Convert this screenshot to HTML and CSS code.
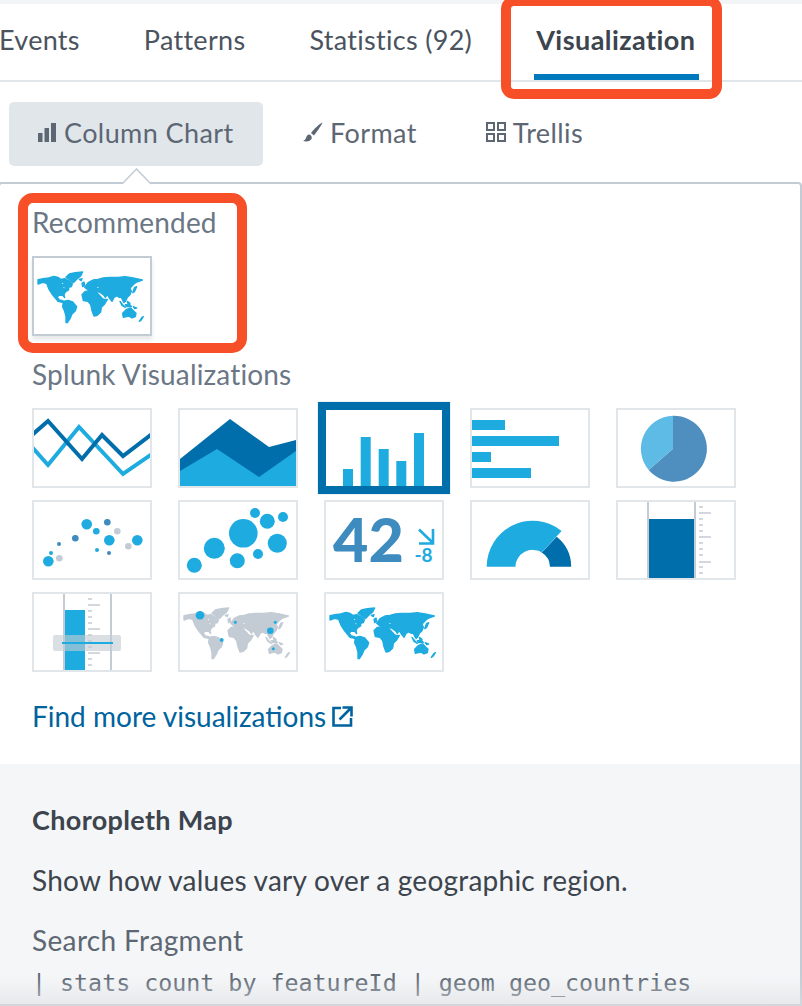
FILE: index.html
```html
<!DOCTYPE html>
<html lang="en">
<head>
<meta charset="utf-8">
<title>Visualization</title>
<link rel="stylesheet" href="styles.css">
</head>
<body>
<svg class="defs" width="0" height="0" aria-hidden="true">
  <symbol id="world" viewBox="0 0 348 228">
    <g transform="translate(12 18)">
      <path d="M0 47L20 43L32 42L48 37L60 40L68 46L80 44L96 52L103 60L100 68L92 70L92 78L82 84L78 92L80 101L74 94L62 94L58 100L64 108L74 110L80 116L70 114L60 112L50 100L42 90L34 78L30 68L26 58L14 55L0 60Z"/>
      <path d="M84 40L94 30L112 26L134 24L128 36L116 46L106 56L96 48Z"/>
      <path d="M76 112L90 109L104 114L116 128L112 140L102 150L96 164L88 176L84 176L84 158L80 142L74 128Z"/>
      <path d="M140 70L150 56L165 48L180 46L196 42L215 40L240 40L262 38L285 42L313 48L296 54L290 58L282 66L276 72L280 82L276 92L268 100L262 112L256 112L250 100L244 100L236 96L228 100L222 112L214 102L208 92L202 100L196 92L184 84L168 82L150 78Z"/>
      <path d="M132 92L142 82L160 80L175 84L186 96L196 106L208 106L200 120L190 130L188 144L178 154L168 156L162 140L158 122L150 112L136 110Z"/>
      <path d="M254 148L266 136L278 132L286 140L294 148L292 158L282 162L272 156L256 160Z"/>
      <path d="M246 112L254 122L262 130L252 124ZM262 122L276 122L280 128L266 128ZM286 128L296 132L290 134ZM256 104L262 110L258 116ZM268 112L276 118L270 120ZM312 160L316 158L310 168L304 172ZM132 58L138 54L140 64L134 68ZM290 70L296 68L290 82L284 86ZM124 46L132 44L130 50Z"/>
      <path class="cut" d="M72 56L76 58L73 61ZM76 69L81 72L77 73ZM177 69L183 70L179 72ZM191 94L196 102L194 102Z"/>
    </g>
  </symbol>
</svg>

<div class="page">
  <div class="topstrip"></div>

  <nav class="tabs">
    <span class="tab">Events</span>
    <span class="tab">Patterns</span>
    <span class="tab">Statistics (92)</span>
    <span class="tab tab-active">Visualization</span>
  </nav>

  <div class="subnav">
    <div class="subbtn subbtn-active">
      <svg class="ico-bars" viewBox="0 0 18 19"><rect x="0" y="10" width="4.500" height="9"/><rect x="6.500" y="5" width="4.500" height="14"/><rect x="13" y="0" width="5" height="19"/></svg>
      <span>Column Chart</span>
    </div>
    <div class="subbtn">
      <svg class="ico-brush" viewBox="0 0 20 20"><path d="M19.500 0.500c-2 .5-8 6-11.500 10.500l3 2.500c3.500-4.500 8-11 8.500-13zM6.500 12.500c-2.500 0-3 2-3.500 3.500-.4 1.300-1.500 2.500-3 3 3 1 7 .5 8.500-2 .8-1.500 0-4-2-4.500z"/></svg>
      <span>Format</span>
    </div>
    <div class="subbtn">
      <svg class="ico-grid" viewBox="0 0 20 20"><rect x="1" y="1" width="7" height="7"/><rect x="12" y="1" width="7" height="7"/><rect x="1" y="12" width="7" height="7"/><rect x="12" y="12" width="7" height="7"/></svg>
      <span>Trellis</span>
    </div>
  </div>

  <section class="panel">
    <svg class="caret" viewBox="0 0 30 17"><path d="M0 16 L14.500 1 L29 16"/></svg>
    <div class="picker">
      <h3 class="group-title">Recommended</h3>
      <div class="tile tile-rec"><svg class="world world-blue" viewBox="0 0 116 76"><use href="#world" width="116" height="76"/></svg></div>

      <h3 class="group-title group-second">Splunk Visualizations</h3>
      <div class="grid">
        <div class="tile"><svg viewBox="0 0 116 76">
          <polyline class="ln ln-light" points="-2,37 14,55 45,17 89,64 118,44"/>
          <polyline class="ln ln-dark" points="-2,25 14,11 48,49 68,25 89,46 118,24"/>
        </svg></div>
        <div class="tile"><svg viewBox="0 0 116 76">
          <polygon class="dark" points="0,49 50,9 89,37 116,30 116,76 0,76"/>
          <polygon class="light" points="0,61 37,39 79,67 116,41 116,76 0,76"/>
        </svg></div>
        <div class="tile tile-sel"><svg viewBox="0 0 116 76">
          <rect class="light" x="17" y="59" width="10" height="17"/>
          <rect class="light" x="34.700" y="27" width="10" height="49"/>
          <rect class="light" x="52.700" y="39" width="10" height="37"/>
          <rect class="light" x="70.300" y="51" width="10" height="25"/>
          <rect class="light" x="88" y="23" width="10" height="53"/>
        </svg></div>
        <div class="tile"><svg viewBox="0 0 116 76">
          <rect class="light" x="0" y="10" width="33" height="10"/>
          <rect class="light" x="0" y="26" width="87" height="10"/>
          <rect class="light" x="0" y="42" width="19" height="10"/>
          <rect class="light" x="0" y="58" width="59" height="10"/>
        </svg></div>
        <div class="tile"><svg viewBox="0 0 116 76">
          <path class="pie-mid" d="M55 38.700L55 5.700A33 33 0 1 1 30.700 60Z"/>
          <path class="pie-light" d="M55 38.700L30.700 60A33 33 0 0 1 55 5.700Z"/>
        </svg></div>

        <div class="tile"><svg viewBox="0 0 116 76">
          <circle class="light" cx="52.700" cy="22.300" r="5.300"/><circle class="light" cx="62.300" cy="29.300" r="3.300"/>
          <circle class="mid" cx="73.300" cy="20.300" r="3.300"/><circle class="grey" cx="83.300" cy="29.300" r="3.300"/>
          <circle class="light" cx="75.300" cy="38.300" r="5.300"/><circle class="light" cx="103.300" cy="38.300" r="5.300"/>
          <circle class="grey" cx="94.300" cy="44.300" r="3.300"/><circle class="mid" cx="41.300" cy="36.300" r="3.300"/>
          <circle class="mid" cx="25" cy="42" r="2"/><circle class="light" cx="63" cy="48" r="2"/>
          <circle class="mid" cx="75" cy="51" r="2"/><circle class="light" cx="17" cy="51" r="2"/>
          <circle class="grey" cx="25.300" cy="56.300" r="3.300"/><circle class="light" cx="14.300" cy="59.300" r="5.300"/>
        </svg></div>
        <div class="tile"><svg viewBox="0 0 116 76">
          <circle class="light" cx="75" cy="11" r="5"/><circle class="light" cx="87.300" cy="19.300" r="7.500"/>
          <circle class="light" cx="103" cy="15" r="5"/><circle class="light" cx="63.300" cy="31.300" r="14.300"/>
          <circle class="light" cx="97.300" cy="41.300" r="9.500"/><circle class="light" cx="34.300" cy="46.300" r="10.500"/>
          <circle class="light" cx="57.300" cy="58.700" r="7.500"/><circle class="light" cx="78" cy="52" r="5"/>
          <circle class="light" cx="14.300" cy="63.300" r="7.500"/>
        </svg></div>
        <div class="tile"><svg viewBox="0 0 116 76">
          <text class="sv-big" x="7" y="60.300">42</text>
          <path class="sv-arrow" d="M93 27.500L106 40M107 27V41.500H93"/>
          <text class="sv-small" x="88.500" y="60.300">-8</text>
        </svg></div>
        <div class="tile"><svg viewBox="0 0 116 76">
          <path class="dark" d="M84.700 34.700A38.500 38.500 0 0 1 99.200 64.700L78 64.700A17.300 17.300 0 0 0 69.700 50.400Z"/>
          <path class="light" d="M14.700 64.700A46 46 0 0 1 89.600 29L69.700 50.400A17.300 17.300 0 0 0 43.400 64.700Z"/>
        </svg></div>
        <div class="tile"><svg viewBox="0 0 116 76">
          <rect class="grey" x="29" y="0" width="2" height="76"/><rect class="grey" x="76" y="0" width="2" height="76"/>
          <rect class="dark" x="31" y="17" width="45" height="59"/>
          <path class="ticks" d="M81 5h4M81 11h12M81 17h4M81 23h4M81 29h4M81 35h12M81 41h4M81 47h4M81 53h4M81 60h12M81 65h4M81 71h4"/>
        </svg></div>

        <div class="tile"><svg viewBox="0 0 116 76">
          <rect class="grey" x="29" y="0" width="2" height="76"/><rect class="grey" x="76" y="0" width="2" height="76"/>
          <rect class="light" x="31" y="16" width="20" height="60"/>
          <path class="ticks" d="M54 5h4M54 11h12M54 17h4M54 23h4M54 29h4M54 35h12M54 41h4M54 47h4M54 53h4M54 59h12M54 65h4M54 71h4"/>
          <rect class="marker" x="19" y="41" width="68" height="16" rx="2"/>
          <rect class="light" x="28" y="48" width="51" height="2"/>
        </svg></div>
        <div class="tile"><svg class="world world-grey" viewBox="0 0 116 76">
          <use href="#world" width="116" height="76"/>
          <circle class="light" cx="20" cy="21.300" r="4.300"/><circle class="light" cx="55.300" cy="28.300" r="1.500"/>
          <circle class="light" cx="95.300" cy="28.300" r="1.500"/><circle class="light" cx="90.300" cy="36.700" r="3.300"/>
          <circle class="light" cx="41.700" cy="46" r="2"/><circle class="light" cx="93.300" cy="54.700" r="1.500"/>
        </svg></div>
        <div class="tile"><svg class="world world-blue" viewBox="0 0 116 76"><use href="#world" width="116" height="76"/></svg></div>
      </div>

      <a class="more" href="#">Find more visualizations
        <svg class="ico-ext" viewBox="0 0 21 21"><path d="M9 2H1.500V19.500H19V12"/><path d="M7.500 13.500L18 3M10.500 1.500H19.500V10.500"/></svg>
      </a>
    </div>

    <div class="details">
      <h4 class="det-title">Choropleth Map</h4>
      <p class="det-desc">Show how values vary over a geographic region.</p>
      <p class="det-label">Search Fragment</p>
      <p class="det-code">| stats count by featureId | geom geo_countries</p>
    </div>
  </section>

  <div class="fade"></div>
  <div class="callout callout-tab"></div>
  <div class="callout callout-rec"></div>
</div>
</body>
</html>
```

FILE: styles.css
```css
* { box-sizing: border-box; }
html, body { margin: 0; padding: 0; background: #fff; }
body { font-family: Lato, "Open Sans", sans-serif; color: #3c444d; }
.defs { position: absolute; }
.page { position: relative; width: 802px; height: 1006px; overflow: hidden; background: #fff; }

.topstrip { height: 4px; background: #f2f4f5; }

.tabs { display: flex; height: 78px; gap: 60px; margin-left: -3px; border-bottom: 2px solid #e1e6eb; }
.tab { display: flex; align-items: center; height: 76px; padding: 2px 2px 2px; font-size: 27px; letter-spacing: .3px; color: #4a535e; border-bottom: 6px solid transparent; }
.tab-active { padding-right: 3px; font-weight: 700; letter-spacing: .45px; color: #3c444d; border-bottom-color: #007abd; }

.subnav { display: flex; align-items: center; height: 64px; margin: 20px 0 0 9px; gap: 22px; }
.subbtn { display: flex; align-items: center; height: 64px; gap: 7px; padding: 0 29px 4px 18px; font-size: 27px; letter-spacing: .4px; color: #5c6773; border-radius: 5px; }
.subbtn-active { width: 254px; gap: 8px; padding: 0 0 4px 29px; background: #e1e6eb; }
.subbtn svg { flex: none; fill: #5c6773; }
.ico-bars { width: 18px; height: 19px; }
.ico-brush { width: 20px; height: 20px; }
.ico-grid { width: 20px; height: 20px; fill: none !important; stroke: #5c6773; stroke-width: 2; }

.panel { position: absolute; top: 182px; left: -2px; width: 804px; height: 830px; border: 2px solid #c3cbd4; border-radius: 4px; background: #fff; }
.caret { position: absolute; left: 122px; top: -16px; width: 30px; height: 17px; fill: #fff; stroke: #c3cbd4; stroke-width: 1.500; }
.picker { height: 580px; padding: 22px 0 0 32px; }

.group-title { margin: 0; font-size: 28px; line-height: 32px; font-weight: 400; letter-spacing: .15px; color: #6b7785; }
.group-second { margin-top: 22px; }

.tile { width: 120px; height: 80px; border: 2px solid #e1e6eb; background: #fff; }
.tile svg { display: block; width: 116px; height: 76px; overflow: hidden; }
.tile-rec { margin-top: 18px; border-color: #c3cbd4; box-shadow: 0 4px 4px rgba(60, 68, 77, .12); }
.tile-sel { border-color: #006eaa; box-shadow: 0 0 0 6px #006eaa, 0 0 1px 6px rgba(0, 110, 170, .5); }

.grid { display: grid; grid-template-columns: repeat(5, 120px); column-gap: 26px; row-gap: 12px; margin-top: 18px; }

.light { fill: #1eabe0; }
.dark { fill: #006eaa; }
.mid { fill: #3d8bbf; }
.grey { fill: #c3cbd4; }
.pie-mid { fill: #4f8fbf; }
.pie-light { fill: #5ebbe6; }
.ln { fill: none; stroke-width: 4; }
.ln-light { stroke: #1eabe0; }
.ln-dark { stroke: #006eaa; }
.ticks { fill: none; stroke: #c3cbd4; stroke-width: 1.400; }
.marker { fill: rgba(195, 203, 212, .62); }
.sv-big { font-family: Lato, sans-serif; font-weight: 900; font-size: 61px; fill: #3d8bbf; }
.sv-small { font-family: Lato, sans-serif; font-weight: 700; font-size: 19px; fill: #1eabe0; }
.sv-arrow { fill: none; stroke: #1eabe0; stroke-width: 2.600; }
.world-blue { fill: #1eabe0; }
.world-blue use { stroke: #1eabe0; stroke-width: 4; stroke-linejoin: round; }
.world-grey { fill: #c3cbd4; }
.world-grey use { stroke: #c3cbd4; stroke-width: 4; stroke-linejoin: round; }
.cut { fill: #fff; stroke: none; }

.more { display: flex; align-items: center; gap: 6px; margin-top: 28px; font-size: 28px; line-height: 32px; color: #00639e; text-decoration: none; }
.ico-ext { width: 21px; height: 21px; fill: none; stroke: #00639e; stroke-width: 2.600; }

.details { height: 260px; padding: 40px 0 0 32px; background: #f5f6f8; }
.det-title { margin: 0; font-size: 27px; line-height: 32px; font-weight: 700; letter-spacing: .35px; color: #3c444d; }
.det-desc { margin: 28px 0 0; font-size: 28px; line-height: 32px; letter-spacing: .24px; color: #3c444d; }
.det-label { margin: 28px 0 0; font-size: 28px; line-height: 32px; letter-spacing: .36px; color: #5c6773; }
.det-code { margin: 12px 0 0; font-family: "DejaVu Sans Mono", "Liberation Mono", monospace; font-size: 23.300px; line-height: 30px; color: #5c6773; white-space: nowrap; }

.fade { position: absolute; left: 0; right: 0; bottom: 0; height: 30px; background: linear-gradient(to bottom, rgba(222, 225, 228, 0), rgba(222, 225, 228, .6)); border-bottom: 2px solid #d3d7db; pointer-events: none; }

.callout { position: absolute; border: 10px solid #f74f27; pointer-events: none; }
.callout-tab { left: 501px; top: -4px; width: 221px; height: 103px; border-radius: 13px; }
.callout-rec { left: 18px; top: 193px; width: 229px; height: 160px; border-radius: 15px; }
```
